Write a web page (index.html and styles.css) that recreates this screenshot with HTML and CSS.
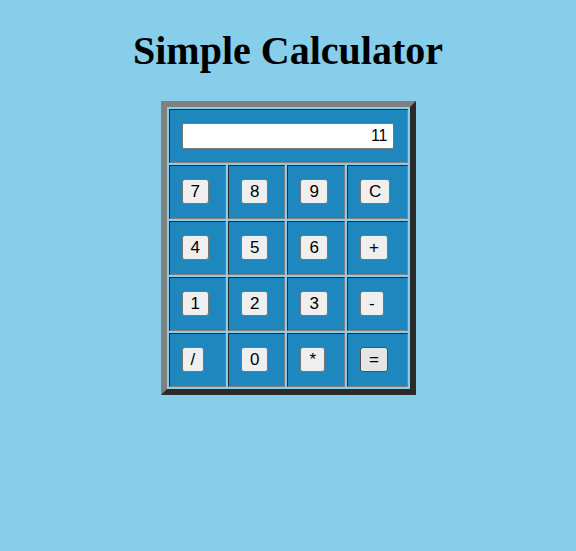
FILE: index.html
```html
<!DOCTYPE html>
<html>
<head>
<meta charset="utf-8">
<title>Simple Calculator</title>
<link rel="stylesheet" href="styles.css">
</head>
<body>
<h1 class="title">Simple Calculator</h1>
<table class="calc">
  <tr>
    <td class="display-cell" colspan="4"><input class="display" type="text" value="11"></td>
  </tr>
  <tr>
    <td class="key-cell"><button class="key">7</button></td>
    <td class="key-cell"><button class="key">8</button></td>
    <td class="key-cell"><button class="key">9</button></td>
    <td class="key-cell"><button class="key">C</button></td>
  </tr>
  <tr>
    <td class="key-cell"><button class="key">4</button></td>
    <td class="key-cell"><button class="key">5</button></td>
    <td class="key-cell"><button class="key">6</button></td>
    <td class="key-cell"><button class="key">+</button></td>
  </tr>
  <tr>
    <td class="key-cell"><button class="key">1</button></td>
    <td class="key-cell"><button class="key">2</button></td>
    <td class="key-cell"><button class="key">3</button></td>
    <td class="key-cell"><button class="key">-</button></td>
  </tr>
  <tr>
    <td class="key-cell"><button class="key">/</button></td>
    <td class="key-cell"><button class="key">0</button></td>
    <td class="key-cell"><button class="key">*</button></td>
    <td class="key-cell"><button class="key key-active">=</button></td>
  </tr>
</table>
</body>
</html>
```

FILE: styles.css
```css
html, body {
  background: #87ceeb;
}
body {
  margin: 0 8px 8px;
  font-family: "Liberation Serif", "Times New Roman", serif;
}
.title {
  font-family: "Liberation Serif", "Times New Roman", serif;
  font-weight: bold;
  font-size: 40px;
  line-height: 44px;
  text-align: center;
  margin: 29px 0 28px;
  color: #000;
}
.calc {
  margin: 0 auto;
  border-collapse: separate;
  border-spacing: 2px;
  border-style: solid;
  border-width: 6px;
  border-color: #808080 #2b2b2b #2b2b2b #808080;
}
.calc td {
  background: #1e88be;
  border-style: solid;
  border-width: 1px;
  border-color: #2b2b2b #808080 #808080 #2b2b2b;
  padding: 13px 12px 14px;
  text-align: left;
  vertical-align: top;
}
.calc .display-cell {
  padding: 13px 13px 13px 12px;
}
.display {
  display: block;
  box-sizing: border-box;
  width: 212px;
  height: 26px;
  margin: 0;
  padding: 3px 5px;
  border: 1px solid #767676;
  border-radius: 2px;
  background: #fff;
  font-family: "Liberation Sans", Arial, sans-serif;
  font-size: 16px;
  line-height: 18px;
  text-align: right;
  color: #000;
  outline: none;
}
.key {
  display: block;
  box-sizing: border-box;
  height: 25px;
  margin: 0;
  padding: 1px 8px;
  border: 1px solid #767676;
  border-radius: 3px;
  background: #efefef;
  font-family: "Liberation Sans", Arial, sans-serif;
  font-size: 17px;
  line-height: 21px;
  color: #000;
}
.key-active {
  background: #e5e5e5;
  border-color: #4f4f4f;
}
```
